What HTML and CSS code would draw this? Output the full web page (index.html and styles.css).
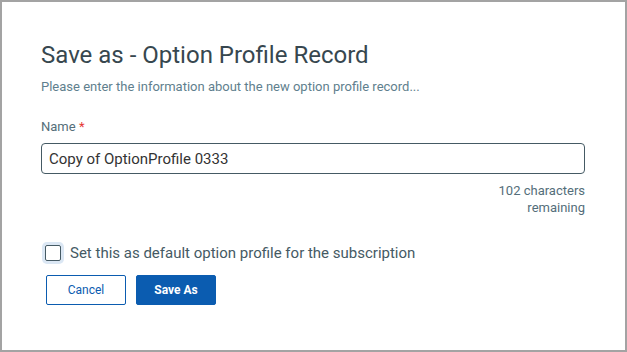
FILE: index.html
```html
<!DOCTYPE html>
<html lang="en">
<head>
  <meta charset="UTF-8">
  <title>Save as - Option Profile Record</title>
  <link rel="stylesheet" href="styles.css">
</head>
<body>
  <div class="dialog">
    <h1 class="dialog-title">Save as - Option Profile Record</h1>
    <div class="dialog-subtitle">Please enter the information about the new option profile record...</div>
    <form class="save-form">
      <label class="field-label">Name <span class="required">*</span></label>
      <input class="field-input" type="text" value="Copy of OptionProfile 0333">
      <div class="char-count">102 characters<br>remaining</div>
      <label class="check-row">
        <span class="check-box"></span>
        <span>Set this as default option profile for the subscription</span>
      </label>
      <div class="actions">
        <button type="button" class="btn btn-outline">Cancel</button>
        <button type="submit" class="btn btn-primary">Save As</button>
      </div>
    </form>
  </div>
</body>
</html>
```

FILE: styles.css
```css
body {
  margin: 0;
  padding: 0;
  font-family: Roboto, "Liberation Sans", sans-serif;
  background: #fff;
}
.dialog {
  width: 627px;
  height: 352px;
  box-sizing: border-box;
  border: 2px solid #a3a3a3;
  padding: 38px 40px 0 39px;
}
.dialog-title {
  margin: 0;
  font-size: 24px;
  font-weight: 400;
  color: #37474f;
  line-height: 30px;
}
.dialog-subtitle {
  margin-top: 9px;
  font-size: 13px;
  color: #5f7f8e;
  line-height: 16px;
}
.save-form {
  display: flex;
  flex-direction: column;
  margin-top: 24px;
}
.field-label {
  font-size: 13px;
  color: #546e7a;
  line-height: 16px;
}
.required {
  color: #e53935;
}
.field-input {
  margin-top: 8px;
  height: 31px;
  box-sizing: border-box;
  border: 1px solid #455a64;
  border-radius: 4px;
  padding: 0 7px;
  font-family: inherit;
  font-size: 15px;
  color: #333;
}
.char-count {
  margin-top: 8px;
  text-align: right;
  font-size: 13px;
  line-height: 17px;
  color: #546e7a;
}
.check-row {
  display: flex;
  align-items: center;
  gap: 9px;
  margin-top: 28px;
  font-size: 15px;
  color: #455a64;
  line-height: 18px;
}
.check-box {
  width: 14px;
  height: 14px;
  border: 1px solid #455a64;
  border-radius: 2px;
  box-shadow: 0 0 0 3px #dbe7f4;
  margin-left: 4px;
}
.actions {
  display: flex;
  gap: 10px;
  margin-top: 13px;
  padding-left: 5px;
}
.btn {
  width: 80px;
  height: 30px;
  box-sizing: border-box;
  border-radius: 2px;
  font-family: inherit;
  font-size: 12px;
  cursor: pointer;
}
.btn-outline {
  background: #fff;
  border: 1px solid #0b5cb0;
  color: #0b5cb0;
}
.btn-primary {
  background: #0b5cb0;
  border: 1px solid #0b5cb0;
  color: #fff;
  font-weight: 700;
}
```
